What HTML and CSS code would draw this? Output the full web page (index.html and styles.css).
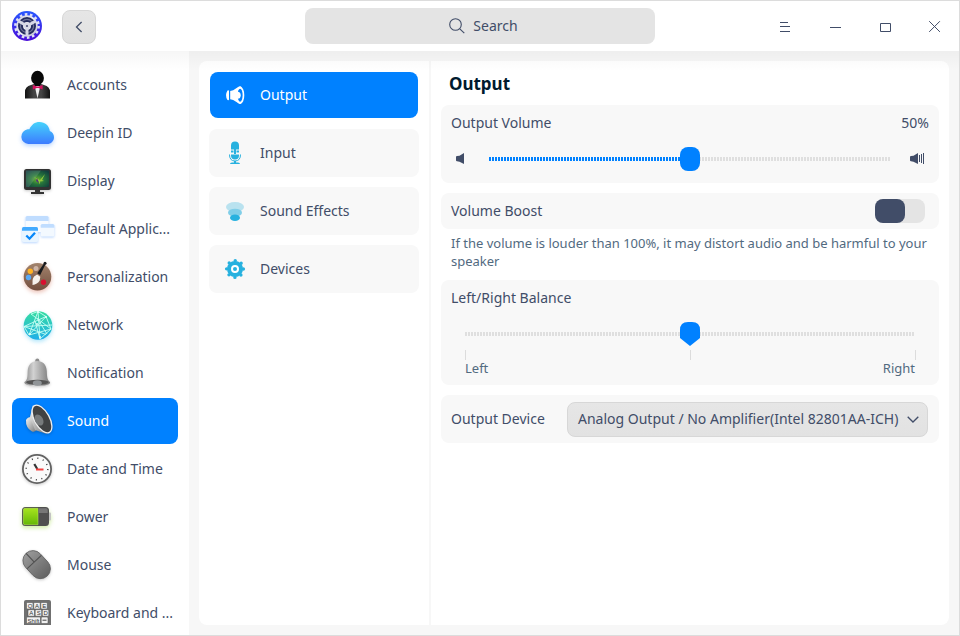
FILE: index.html
```
<!DOCTYPE html>
<html lang="en">
<head>
<meta charset="utf-8">
<title>Control Center</title>
<link rel="stylesheet" href="styles.css">
</head>
<body>
<div class="window">
  <header class="titlebar">
    <svg class="logo" viewBox="0 0 30 30">
      <defs>
        <linearGradient id="lg" x2="0" y2="1"><stop offset="0" stop-color="#2858ff"/><stop offset="1" stop-color="#4a0cd8"/></linearGradient>
        <linearGradient id="lm" x2="1" y2="1"><stop offset="0" stop-color="#c9cbdc"/><stop offset=".5" stop-color="#f0f0f8"/><stop offset="1" stop-color="#b5b6cc"/></linearGradient>
      </defs>
      <circle cx="15" cy="15" r="15" fill="url(#lg)"/>
      <circle cx="15" cy="15" r="11.6" fill="none" stroke="#dfe1f5" stroke-width="2.600" stroke-dasharray="2.600 2.606"/>
      <circle cx="15" cy="15" r="10.700" fill="url(#lm)"/>
      <circle cx="15" cy="15" r="6.500" fill="none" stroke="#242b5e" stroke-width="5"/>
      <circle cx="15" cy="15" r="6.600" fill="none" stroke="#6c7296" stroke-width="1.200"/>
      <path d="M15 15V25M15 15L6.300 10M15 15l8.700-5" stroke="#d5d7e6" stroke-width="3"/>
      <circle cx="15" cy="15" r="3" fill="#d9dae8"/><circle cx="15" cy="15" r="1.100" fill="#4c5078"/>
    </svg>
    <button class="back"><svg viewBox="0 0 8 12"><path d="M6.600 1L1.500 6l5.100 5"/></svg></button>
    <div class="search">
      <svg viewBox="0 0 16 16"><circle cx="6.500" cy="6.500" r="5.800"/><path d="M10.800 10.800l4.500 4.400"/></svg>
      <span>Search</span>
    </div>
    <div class="controls">
      <svg viewBox="0 0 12 12"><path d="M1 1.500h8M1 5.500h10M1 10.500h10"/></svg>
      <svg viewBox="0 0 12 12"><path d="M1 6.500h11"/></svg>
      <svg viewBox="0 0 12 12"><path d="M1.500 2.500h10v8h-10z"/></svg>
      <svg viewBox="0 0 12 12"><path d="M.200.200l10.700 10.700M10.900.200L.200 10.900"/></svg>
    </div>
  </header>
  <div class="body">
    <nav class="sidebar">
      <div class="item"><svg viewBox="0 0 36 46">
        <defs><linearGradient id="suit" x2="1"><stop offset="0" stop-color="#111"/><stop offset=".35" stop-color="#444"/><stop offset=".65" stop-color="#444"/><stop offset="1" stop-color="#111"/></linearGradient></defs>
        <path d="M5 36.500V30q0-5.500 6-7l4-1.500h5l4 1.500q6 1.500 6 7v6.500z" fill="url(#suit)"/>
        <path d="M14.500 23l3 13.500L20.500 23z" fill="#eee"/>
        <ellipse cx="17.500" cy="16" rx="6.400" ry="7.200" fill="#080808"/><path d="M14.500 20h6v4h-6z" fill="#080808"/>
        <path d="M12.800 23l4 1.600h1.600l4.200-1.600v4.400l-4.200-1.500h-1.600l-4 1.500z" fill="#d5105f"/></svg><span>Accounts</span></div>
      <div class="item"><svg class="glow-blue" viewBox="0 0 36 46">
        <defs><linearGradient id="cl" x2="0" y2="1"><stop offset="0" stop-color="#45d3fb"/><stop offset="1" stop-color="#3c7bff"/></linearGradient></defs>
        <path d="M8.300 34A7.400 7.400 0 0 1 7.600 19.300H9.400C11.500 14.500 15 12 19.500 12c5.500 0 9.800 3.800 10.300 9C32.500 21.800 34 24.500 34 27.200 34 31 31 34 27.200 34z" fill="url(#cl)"/></svg><span>Deepin ID</span></div>
      <div class="item"><svg class="drop" viewBox="0 0 36 46">
        <defs><radialGradient id="scr" cx=".5" cy=".55" r=".65"><stop offset="0" stop-color="#6cb32c"/><stop offset=".45" stop-color="#26743b"/><stop offset="1" stop-color="#103f3e"/></radialGradient></defs>
        <rect x="4" y="11" width="27" height="21" rx="2.500" fill="#323232"/>
        <rect x="6" y="12.500" width="23" height="16.500" rx="1" fill="url(#scr)"/>
        <path d="M14 19l6 3 5-6-3 6 2 1-4 .5 0 3-2-4z" fill="#93c83d"/><path d="M17 20l2 5-3-2z" fill="#52327e"/>
        <path d="M6 12.500h15L9 29H6z" fill="#fff" opacity=".13"/>
        <path d="M15 32h5v2h4v2H11v-2h4z" fill="#333"/></svg><span>Display</span></div>
      <div class="item"><svg class="glow-soft" viewBox="0 0 36 46">
        <rect x="5.600" y="10" width="23" height="16" rx="1.500" fill="#f8fbff"/><path d="M5.600 15v-3.500q0-1.500 1.500-1.500h20q1.500 0 1.500 1.500V15z" fill="#c0ddff"/>
        <rect x="20.700" y="18" width="13.600" height="12.500" rx="1.500" fill="#f3f9ff"/><path d="M20.700 21.800v-2.300q0-1.500 1.500-1.500h10.600q1.500 0 1.500 1.500v2.300z" fill="#c0ddff"/>
        <rect x="2" y="21" width="16" height="15" rx="1.500" fill="#e9f5ff"/><path d="M2 24.800v-2.300Q2 21 3.500 21h13Q18 21 18 22.500v2.300z" fill="#42aaff"/>
        <path d="M6.300 29.500l3.200 3.200 5.500-6" fill="none" stroke="#0787fa" stroke-width="2.300"/></svg><span>Default Applic...</span></div>
      <div class="item"><svg class="glow-red" viewBox="0 0 36 46">
        <defs><linearGradient id="pal" x2="0" y2="1"><stop offset="0" stop-color="#a2836d"/><stop offset="1" stop-color="#74503f"/></linearGradient></defs>
        <circle cx="17.500" cy="22.700" r="13.800" fill="url(#pal)"/>
        <circle cx="10.300" cy="17.300" r="2.700" fill="#ffb223"/><circle cx="16" cy="14.500" r="2.500" fill="#ceb5a7"/><circle cx="8.500" cy="23.500" r="2.700" fill="#59a8f4"/><circle cx="23.500" cy="28.300" r="2.700" fill="#d8102f"/>
        <path d="M24.800 8.300l1.400.8-6 12-3-1.900z" fill="#17191c"/><circle cx="25" cy="9.300" r="1.500" fill="#17191c"/>
        <path d="M12.500 31c.5-3-.8-5.300 1.600-8.500l3-2 3.200 2.300-.6 3.700c-1.200 2.800-4.200 4-7.200 4.500z" fill="#f6f2ed"/></svg><span>Personalization</span></div>
      <div class="item"><svg class="glow-cyan" viewBox="0 0 36 46">
        <defs><linearGradient id="net" x2="0" y2="1"><stop offset="0" stop-color="#36dda0"/><stop offset="1" stop-color="#20aee9"/></linearGradient></defs>
        <circle cx="18" cy="23.500" r="14.300" fill="url(#net)"/>
        <path d="M11 12l7-2.500 8 5-22 10 28-1.500M18 9.500L9 33M18 9.500L20 37M26 14.500L9 33M20 37L31 27M11 12l20 15L9 33 4 24.500l22 8M15 19l5 18M26 14.500l5 12.500M17 16l10 16" fill="none" stroke="#c5fff3" stroke-width=".9"/>
        <g fill="#e5fffa"><circle cx="18" cy="10" r="1"/><circle cx="10" cy="32" r="1"/><circle cx="26" cy="15" r="1"/><circle cx="20" cy="35" r="1"/><circle cx="17" cy="22" r="1"/></g></svg><span>Network</span></div>
      <div class="item"><svg class="drop" viewBox="0 0 36 46">
        <defs><linearGradient id="bell" x2="1"><stop offset="0" stop-color="#888"/><stop offset=".35" stop-color="#d2d2d2"/><stop offset="1" stop-color="#777"/></linearGradient></defs>
        <rect x="15.300" y="8.500" width="4" height="5" rx="2" fill="#8d8d8d"/>
        <path d="M4.500 32c3-2 3-5 3.200-11C8 14.500 12 11 17.300 11s9.200 3.500 9.500 10c.2 6 .4 9 3.200 11 .7 2.500-4.500 4-12.700 4S3.600 34.500 4.500 32z" fill="url(#bell)"/>
        <ellipse cx="17.300" cy="32.300" rx="11.300" ry="2.600" fill="#555"/><ellipse cx="17.300" cy="33" rx="4.500" ry="2.700" fill="#919598"/></svg><span>Notification</span></div>
      <div class="item selected"><svg class="drop" viewBox="0 0 36 46">
        <defs><linearGradient id="sp" x2="1" y2="1"><stop offset="0" stop-color="#f7f7f7"/><stop offset="1" stop-color="#777"/></linearGradient></defs>
        <path d="M6 22q1.500-3 5-3l6 12q-1.500 3.500-5 2.500Q5.500 30 6 22z" fill="url(#sp)"/>
        <path d="M13 7l-3 12 5 13 12 4z" fill="url(#sp)"/>
        <ellipse cx="22" cy="21" rx="7.500" ry="15.300" transform="rotate(-29 22 21)" fill="#414243" stroke="#eee" stroke-width="1.300"/>
        <ellipse cx="19" cy="22" rx="4" ry="6" transform="rotate(-29 19 22)" fill="#777a7c"/></svg><span>Sound</span></div>
      <div class="item"><svg class="drop" viewBox="0 0 36 46">
        <circle cx="17" cy="23" r="14.100" fill="#fafafa" stroke="#626262" stroke-width="1.800"/>
        <circle cx="17" cy="23" r="10.800" fill="none" stroke="#444" stroke-width="1.500" stroke-dasharray="1.100 4.555"/>
        <path d="M14.300 18l3 5" stroke="#333" stroke-width="2.200"/><path d="M16 23.500h7.500" stroke="#f34140" stroke-width="2"/></svg><span>Date and Time</span></div>
      <div class="item"><svg class="glow-green" viewBox="0 0 36 46">
        <defs><linearGradient id="bat" x2="0" y2="1"><stop offset="0" stop-color="#a6e41e"/><stop offset="1" stop-color="#65b807"/></linearGradient></defs>
        <rect x="28" y="18.500" width="3" height="8" rx="1" fill="#c4c4c4"/><rect x="2" y="13" width="27" height="19" rx="3.500" fill="#505050"/>
        <path d="M3.300 16q0-1.700 1.700-1.700h13v16.400H5q-1.700 0-1.700-1.700z" fill="url(#bat)" stroke="#c3ee5d" stroke-width=".5"/><path d="M18.500 14.300H26q1.700 0 1.700 1.700v3h-9.200z" fill="#777"/></svg><span>Power</span></div>
      <div class="item"><svg class="drop" viewBox="0 0 36 46">
        <defs><linearGradient id="ms" x2="0" y2="1"><stop offset="0" stop-color="#999"/><stop offset="1" stop-color="#636363"/></linearGradient></defs>
        <g transform="rotate(-43 17 23)"><rect x="7" y="7" width="20" height="31" rx="10" fill="url(#ms)" stroke="#606060" stroke-width=".8"/>
        <path d="M7.300 19h19.400M17 7v12" stroke="#505050" stroke-width="1.100"/></g></svg><span>Mouse</span></div>
      <div class="item"><svg viewBox="0 0 36 46">
        <rect x="4" y="10" width="27" height="29" rx="2" fill="#707070"/>
        <g fill="#f1f1f1" stroke="#484848" stroke-width=".5"><rect x="6.500" y="12.500" width="6.500" height="6.500" rx="1"/><rect x="13.700" y="12.500" width="6.500" height="6.500" rx="1"/><rect x="20.800" y="12.500" width="6.500" height="6.500" rx="1"/>
        <rect x="8" y="19.700" width="6.500" height="6.500" rx="1"/><rect x="15.200" y="19.700" width="6.500" height="6.500" rx="1"/><rect x="22.300" y="19.700" width="6.500" height="6.500" rx="1"/><rect x="6.500" y="27" width="14" height="6.500" rx="1"/><rect x="21.200" y="27" width="6.800" height="6.500" rx="1"/></g>
        <g class="keys"><text x="7.700" y="18">Q</text><text x="15" y="18">A</text><text x="22.300" y="18">E</text><text x="9.300" y="25.200">A</text><text x="16.700" y="25.200">S</text><text x="23.600" y="25.200">D</text><text x="7.500" y="32.500">Shift</text></g>
        <path d="M22.500 30.200h4" stroke="#444"/></svg><span>Keyboard and ...</span></div>
    </nav>
    <main class="panel">
      <nav class="tabs">
        <div class="tab active"><svg viewBox="0 0 24 24" fill="#fff"><path d="M4.500 7.500Q6 7 6 8v8.500q0 1-1.500.5-3-4.500 0-9.500zM7.200 8l3-.7L15.500 3.800q1.800-1 2.800 0v16.700q-1 1-2.800-.2L10.200 17l-3-.7z"/><ellipse cx="17" cy="12.200" rx="3.600" ry="8" fill="#fff" stroke="#fff" stroke-width="1.400"/><ellipse cx="17.100" cy="12.200" rx="2.500" ry="6.500" fill="#0081ff"/><ellipse cx="14.700" cy="12.200" rx="3" ry="3.500"/></svg><span>Output</span></div>
        <div class="tab"><svg viewBox="0 0 24 24" fill="#27b1df"><path d="M8 8.500V4.500Q8 .5 12 .5t4 4v4zM8 9.500h2.500v2H8zM13.500 9.500H16v2h-2.500zM11 8h2v5h-2zM8 13.500h8v1q0 4-4 4t-4-4z"/><path d="M6.500 13.500q0 6.500 5.500 6.500t5.500-6.500" fill="none" stroke="#27b1df" stroke-width="1"/><path d="M11 20h2v1.500h2q2 .3 2 1.500H7q0-1.200 2-1.500h2z"/></svg><span>Input</span></div>
        <div class="tab"><svg viewBox="0 0 24 24"><ellipse cx="12" cy="8" rx="9" ry="5" fill="#b9e2ef"/><ellipse cx="12" cy="13.700" rx="7" ry="4" fill="#80cee8"/><ellipse cx="12" cy="18.800" rx="5" ry="3.200" fill="#27b1df"/></svg><span>Sound Effects</span></div>
        <div class="tab"><svg viewBox="0 0 24 24"><circle cx="12" cy="12" r="8" fill="#27b1df"/><circle cx="12" cy="12" r="8.400" fill="none" stroke="#27b1df" stroke-width="3.400" stroke-linecap="round" stroke-dasharray="0 6.597"/><circle cx="12" cy="12" r="3" fill="#27b1df" stroke="#fff" stroke-width="2"/></svg><span>Devices</span></div>
      </nav>
      <section class="content">
        <h1>Output</h1>
        <div class="card volume">
          <div class="row"><span>Output Volume</span><span>50%</span></div>
          <div class="slider">
            <svg class="quiet" viewBox="0 0 8 11"><path d="M0 4Q0 3 1 3L3.500 2.700 8 0V11L3.500 8.700 1 8.300Q0 8.300 0 7.300z"/></svg>
            <div class="track"><div class="filled"></div><div class="handle"></div></div>
            <svg class="loud" viewBox="0 0 15 11"><path d="M0 4Q0 3 1 3L3.500 2.700 8 0V11L3.500 8.700 1 8.300Q0 8.300 0 7.300zM9 2h1v7H9zM11 1h1v9h-1zM13 0h1v11h-1z"/></svg>
          </div>
        </div>
        <div class="card boost"><span>Volume Boost</span><div class="switch"><div class="knob"></div></div></div>
        <p class="hint">If the volume is louder than 100%, it may distort audio and be harmful to your speaker</p>
        <div class="card balance">
          <span>Left/Right Balance</span>
          <div class="track"><svg class="pointer" viewBox="0 0 20 24"><path d="M0 8Q0 0 8 0h4q8 0 8 8v8l-10 8L0 16z"/></svg></div>
          <div class="ticks"><i></i><i></i><i></i></div>
          <div class="ends"><span>Left</span><span>Right</span></div>
        </div>
        <div class="card device"><span>Output Device</span>
          <div class="combo"><span>Analog Output / No Amplifier(Intel 82801AA-ICH)</span><svg viewBox="0 0 12 7"><path d="M.700.700L6 6l5.300-5.300"/></svg></div>
        </div>
      </section>
    </main>
  </div>
</div>
</body>
</html>
```
FILE: styles.css
```
* { box-sizing: border-box; }
body {
  margin: 0;
  font: 14px/20px "Noto Sans", "Open Sans", sans-serif;
  color: #414d68;
}
svg { display: block; flex: none; }
.window {
  width: 960px;
  height: 636px;
  border: 1px solid #dcdcdc;
  display: flex;
  flex-direction: column;
  overflow: hidden;
  background: #f7f7f7;
}
.titlebar {
  position: relative;
  flex: none;
  height: 50px;
  background: #fff;
  display: flex;
  align-items: center;
  padding-left: 11px;
}
.titlebar::after {
  content: "";
  position: absolute;
  top: 50px;
  left: 0;
  right: 0;
  height: 20px;
  background: linear-gradient(rgba(0, 0, 0, .035), transparent);
  pointer-events: none;
}
.logo { width: 30px; height: 30px; }
.back {
  width: 34px;
  height: 34px;
  margin: 2px 0 0 20px;
  padding: 0 1px 0 0;
  border: 1px solid #d7d7d7;
  border-radius: 8px;
  background: linear-gradient(#e6e6e6, #e2e2e2);
  display: flex;
  align-items: center;
  justify-content: center;
}
.back svg { width: 8px; height: 12px; }
.back path, .search svg, .controls path, .combo path { fill: none; stroke: #414d68; }
.back path, .combo path { stroke-width: 1.3; }
.search {
  width: 350px;
  height: 36px;
  margin: 0 0 0 209px;
  border-radius: 8px;
  background: #e4e4e4;
  display: flex;
  align-items: center;
  justify-content: center;
  gap: 8px;
  padding-left: 7px;
}
.search svg { width: 16px; height: 16px; stroke-width: 1.1; }
.controls { display: flex; gap: 38px; margin: 2px 0 0 124px; }
.controls svg { width: 12px; height: 12px; }
.body { flex: 1; min-height: 0; display: flex; }
.sidebar {
  width: 188px;
  height: 574px;
  flex: none;
  padding: 10px 11px 0;
  background: #fff;
  overflow: hidden;
  box-shadow: 0 10px #fff;
}
.item {
  height: 46px;
  margin: 0 0 2px;
  padding-left: 8px;
  border-radius: 8px;
  display: flex;
  align-items: center;
  gap: 11px;
  white-space: nowrap;
}
.item:first-child { margin-top: 1px; }
.item svg { width: 36px; height: 46px; }
.item.selected, .tab.active { background: #0081ff; color: #fff; }
.keys { font: 6px "Liberation Sans", sans-serif; fill: #333; }
.drop { filter: drop-shadow(0 1px 1.5px rgba(0, 0, 0, .22)); }
.glow-blue { filter: drop-shadow(0 2px 2px rgba(60, 140, 255, .35)); }
.glow-soft { filter: drop-shadow(0 1px 1px rgba(60, 140, 255, .35)); }
.glow-red { filter: drop-shadow(0 2px 2px rgba(200, 80, 50, .35)); }
.glow-cyan { filter: drop-shadow(0 2px 2px rgba(30, 180, 240, .35)); }
.glow-green { filter: drop-shadow(0 2px 2px rgba(140, 210, 30, .4)); }
.panel {
  width: 750px;
  height: 564px;
  margin: 10px 0 0 10px;
  background: #fff;
  border-radius: 8px;
  display: flex;
}
.tabs {
  width: 232px;
  flex: none;
  padding: 10px;
  border-right: 2px solid #f7f7f7;
  display: flex;
  flex-direction: column;
  gap: 10px;
}
.tab {
  height: 48px;
  padding-left: 14px;
  border-radius: 8px;
  background: #f8f8f8;
  display: flex;
  align-items: center;
  gap: 13px;
}
.tab.active { height: 46px; margin: 1px; padding-left: 13px; }
.tab svg { width: 24px; height: 24px; }
.content { width: 518px; padding: 10px; }
h1 {
  height: 34px;
  margin: 0;
  padding-left: 8px;
  font-size: 17px;
  line-height: 25px;
  color: #001a2e;
}
.card {
  background: #f8f8f8;
  border-radius: 8px;
  margin-bottom: 10px;
  padding: 8px 10px;
}
.volume { height: 78px; }
.row { display: flex; justify-content: space-between; }
.slider { display: flex; align-items: center; margin-top: 13px; height: 25px; padding-left: 5px; }
.quiet { width: 8px; height: 11px; fill: #414d68; }
.loud { width: 15px; height: 11px; fill: #414d68; margin-left: 20px; }
.track {
  position: relative;
  width: 401px;
  height: 4px;
  background: repeating-linear-gradient(90deg, #dfdfdf 0 2px, transparent 2px 3px);
}
.slider .track { margin: 1px 0 0 25px; }
.filled {
  width: 50%;
  height: 4px;
  background: repeating-linear-gradient(90deg, #0081ff 0 2px, #f8f8f8 2px 3px);
}
.handle {
  position: absolute;
  left: 191px;
  top: -10px;
  width: 20px;
  height: 24px;
  border-radius: 8px;
  background: #0081ff;
}
.boost {
  height: 36px;
  margin-bottom: 5px;
  padding-right: 14px;
  display: flex;
  align-items: center;
  justify-content: space-between;
}
.switch { width: 50px; height: 24px; border-radius: 8px; background: #e4e4e4; }
.knob { width: 30px; height: 24px; border-radius: 8px; background: #414d68; }
.hint {
  margin: 0;
  padding: 0 10px;
  height: 46px;
  font-size: 13px;
  line-height: 18px;
  color: #526a7f;
}
.balance { height: 105px; }
.balance .track { width: 449px; margin: 24px 0 0 14px; }
.pointer { position: absolute; left: 215px; top: -10px; width: 20px; height: 24px; fill: #0081ff; }
.ticks { display: flex; justify-content: space-between; width: 451px; margin: 14px 0 0 14px; }
.ticks i { width: 1px; height: 10px; background: #dcdcdc; }
.ends {
  display: flex;
  justify-content: space-between;
  width: 450px;
  margin: -1px 0 0 14px;
  font-size: 13px;
  line-height: 18px;
  color: #526a7f;
}
.device {
  height: 48px;
  display: flex;
  align-items: center;
  justify-content: space-between;
}
.combo {
  width: 361px;
  height: 35px;
  padding: 0 8px 0 10px;
  border: 1px solid #d7d7d7;
  border-radius: 8px;
  background: linear-gradient(#e6e6e6, #e2e2e2);
  display: flex;
  align-items: center;
  justify-content: space-between;
  white-space: nowrap;
}
.device .combo { margin-right: 1px; }
.combo svg { width: 12px; height: 7px; }
```
